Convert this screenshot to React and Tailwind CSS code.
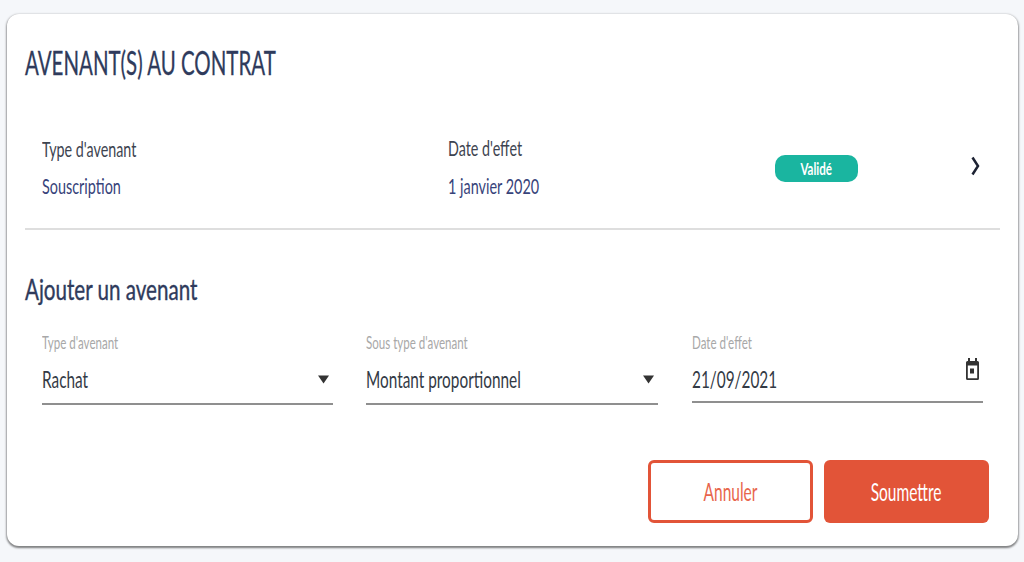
import React from "react";

function Squeezed({ className = "", children }) {
  return (
    <span className={"inline-block origin-left whitespace-nowrap " + className}>
      {children}
    </span>
  );
}

function CaretDown() {
  return (
    <svg width="11" height="9" viewBox="0 0 11 9" className="mr-[4px]">
      <path d="M0 0.500H11L5.500 8.500Z" fill="#333333" />
    </svg>
  );
}

function CalendarIcon() {
  return (
    <svg width="13" height="22" viewBox="0 0 13 22">
      <path
        d="M2 0h2v3h5V0h2v3h.5A1.500 1.500 0 0 1 13 4.500V20.500A1.500 1.500 0 0 1 11.500 22h-10A1.500 1.500 0 0 1 0 20.500V4.500A1.500 1.500 0 0 1 1.500 3H2ZM1.800 7.500V20.200h9.400V7.500Z"
        fill="#333333"
        fillRule="evenodd"
      />
      <rect x="4" y="10.500" width="4" height="5" fill="#333333" />
    </svg>
  );
}

function Field({ label, value, action, className = "h-[75px] w-[292px]" }) {
  return (
    <div className={"flex flex-col border-b-2 border-[#8f8f8f] " + className}>
      <div className="h-[24px] pt-[3px] text-[17px] leading-[20px] text-[#a8a8a8]">
        <Squeezed className="scale-x-[0.68]">{label}</Squeezed>
      </div>
      <div className="flex items-center justify-between pt-[10px] text-[#333a45]">
        <span className="text-[24px] leading-[30px]">
          <Squeezed className="scale-x-[0.64]">{value}</Squeezed>
        </span>
        {action}
      </div>
    </div>
  );
}

export default function App() {
  return (
    <div className="h-[562px] w-[1024px] overflow-hidden bg-[#f5f7fa] px-[7px] pt-[14px] font-['Lato',sans-serif]">
      <div className="flex h-[532px] w-[1011px] flex-col rounded-[12px] bg-white px-[18px] shadow-[0_1px_2px_1px_rgba(0,0,0,0.3),0_2px_2px_rgba(0,0,0,0.25)]">
        <h1 className="mt-[28px] h-[40px] text-[33px] leading-[40px] font-normal text-[#2f3b5c] [-webkit-text-stroke:0.3px_#2f3b5c]">
          <Squeezed className="scale-x-[0.62]">AVENANT(S) AU CONTRAT</Squeezed>
        </h1>

        {/* Ligne avenant existant */}
        <div className="mt-[53px] flex h-[95px] items-start border-b-2 border-[#dedede] pl-[17px]">
          <div className="w-[406px]">
            <div className="text-[22px] leading-[28px] text-[#3d4450]">
              <Squeezed className="scale-x-[0.65]">Type d'avenant</Squeezed>
            </div>
            <div className="mt-[9px] text-[22px] leading-[28px] text-[#37437a]">
              <Squeezed className="scale-x-[0.655]">Souscription</Squeezed>
            </div>
          </div>
          <div className="w-[327px]">
            <div className="-mt-[1px] text-[22px] leading-[28px] text-[#3d4450]">
              <Squeezed className="scale-x-[0.65]">Date d'effet</Squeezed>
            </div>
            <div className="mt-[10px] text-[22px] leading-[28px] text-[#37437a]">
              <Squeezed className="scale-x-[0.655]">1 janvier 2020</Squeezed>
            </div>
          </div>
          <div className="mt-[20px] flex h-[27px] w-[83px] items-center justify-center rounded-[10px] bg-[#1ab5a0] text-[17px] font-bold text-white">
            <span className="inline-block scale-x-[0.68]">Validé</span>
          </div>
          <svg width="10" height="20" viewBox="0 0 10 20" className="mt-[21px] ml-[112px]">
            <path d="M2.500 1.500L8 10L2.500 18.500" fill="none" stroke="#1d2233" strokeWidth="2.500" />
          </svg>
        </div>

        <h2 className="mt-[40px] h-[38px] text-[29px] leading-[38px] font-normal text-[#2f3b5c] [-webkit-text-stroke:0.4px_#2f3b5c]">
          <Squeezed className="scale-x-[0.71]">Ajouter un avenant</Squeezed>
        </h2>

        <div className="mt-[22px] flex items-start gap-[33px] pl-[17px]">
          <Field
            label="Type d'avenant"
            value="Rachat"
            action={<CaretDown />}
            className="h-[75px] w-[291px]"
          />
          <Field
            label="Sous type d'avenant"
            value="Montant proportionnel"
            action={<CaretDown />}
          />
          <Field
            label="Date d'effet"
            value="21/09/2021"
            className="ml-[1px] h-[73px] w-[291px]"
            action={<span className="-mt-[20px] mr-[4px] flex"><CalendarIcon /></span>}
          />
        </div>

        <div className="mt-[55px] flex justify-end gap-[11px] pr-[11px]">
          <button className="flex h-[63px] w-[165px] items-center justify-center rounded-[6px] border-[3px] border-[#e25438] bg-white text-[25px] text-[#e8654c]">
            <span className="inline-block scale-x-[0.62]">Annuler</span>
          </button>
          <button className="flex h-[63px] w-[165px] items-center justify-center rounded-[6px] bg-[#e25438] text-[25px] text-white">
            <span className="inline-block scale-x-[0.62]">Soumettre</span>
          </button>
        </div>
      </div>
    </div>
  );
}
